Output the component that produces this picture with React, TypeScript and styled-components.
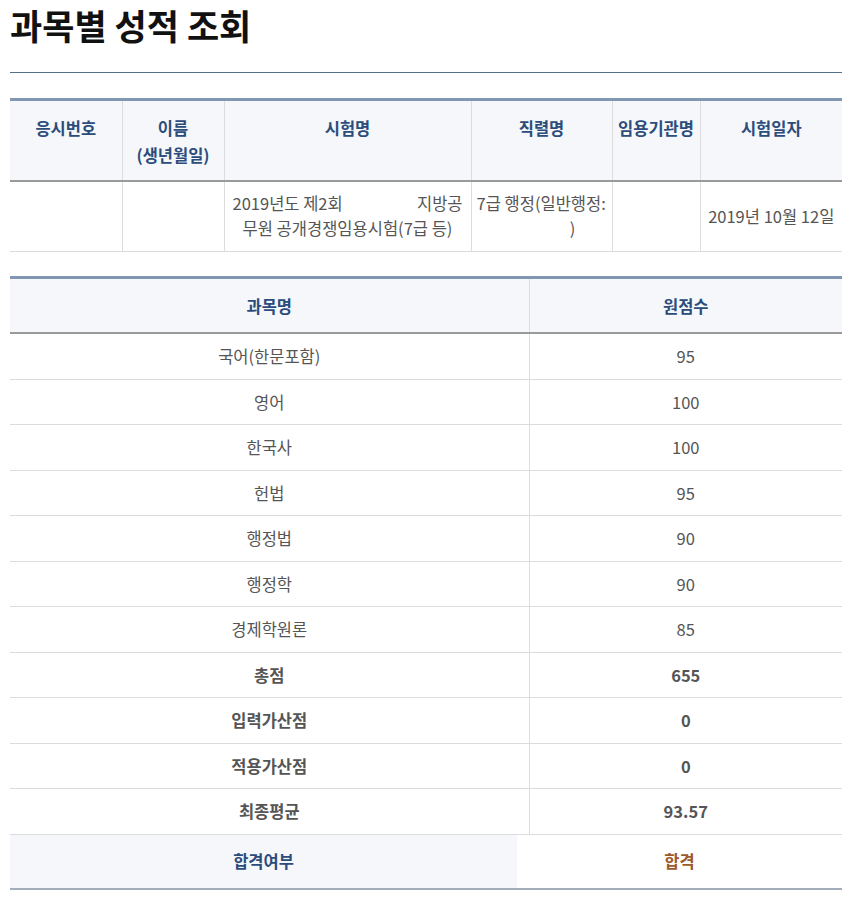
import { FC } from 'react';
import styled, { createGlobalStyle } from 'styled-components';

const GlobalStyle = createGlobalStyle`
  body {
    margin: 0;
    background: #fff;
    font-family: 'Noto Sans CJK KR', 'Noto Sans', sans-serif;
  }
`;

const scores = [
  { name: '국어(한문포함)', score: '95' },
  { name: '영어', score: '100' },
  { name: '한국사', score: '100' },
  { name: '헌법', score: '95' },
  { name: '행정법', score: '90' },
  { name: '행정학', score: '90' },
  { name: '경제학원론', score: '85' },
  { name: '총점', score: '655', strong: true },
  { name: '입력가산점', score: '0', strong: true },
  { name: '적용가산점', score: '0', strong: true },
  { name: '최종평균', score: '93.57', strong: true },
];

const App: FC = () => {
  return (
    <Page>
      <GlobalStyle />
      <PageTitle>과목별 성적 조회</PageTitle>
      <TitleLine />

      <InfoTable>
        <colgroup>
          <col style={{ width: 112 }} />
          <col style={{ width: 102 }} />
          <col style={{ width: 247 }} />
          <col style={{ width: 141 }} />
          <col style={{ width: 88 }} />
          <col style={{ width: 142 }} />
        </colgroup>
        <thead>
          <tr>
            <InfoHead>응시번호</InfoHead>
            <InfoHead>
              이름
              <br />
              (생년월일)
            </InfoHead>
            <InfoHead>시험명</InfoHead>
            <InfoHead>직렬명</InfoHead>
            <InfoHead>임용기관명</InfoHead>
            <InfoHead>시험일자</InfoHead>
          </tr>
        </thead>
        <tbody>
          <tr>
            <InfoCell></InfoCell>
            <InfoCell></InfoCell>
            <InfoCell $pad={8}>
              <SplitLine>
                <span>2019년도 제2회</span>
                <span>지방공</span>
              </SplitLine>
              <Line $align="center">무원 공개경쟁임용시험(7급 등)</Line>
            </InfoCell>
            <InfoCell $pad={5}>
              <Line $align="left">7급 행정(일반행정:</Line>
              <Line $align="center" $shift={62}>
                )
              </Line>
            </InfoCell>
            <InfoCell></InfoCell>
            <InfoCell>2019년 10월 12일</InfoCell>
          </tr>
        </tbody>
      </InfoTable>

      <ScoreTable>
        <colgroup>
          <col style={{ width: 519 }} />
          <col style={{ width: 313 }} />
        </colgroup>
        <thead>
          <tr>
            <ScoreHead>과목명</ScoreHead>
            <ScoreHead>원점수</ScoreHead>
          </tr>
        </thead>
        <tbody>
          {scores.map((item, idx) => (
            <tr key={idx}>
              <ScoreCell $strong={item.strong}>{item.name}</ScoreCell>
              <ScoreCell $strong={item.strong}>{item.score}</ScoreCell>
            </tr>
          ))}
        </tbody>
      </ScoreTable>

      <ResultRow>
        <ResultLabel>합격여부</ResultLabel>
        <ResultValue>합격</ResultValue>
      </ResultRow>
    </Page>
  );
};

export default App;

const Page = styled.div`
  width: 832px;
  padding: 0 0 20px 10px;
`;

const PageTitle = styled.h1`
  margin: 0;
  padding-top: 1px;
  font-size: 35px;
  line-height: 48px;
  font-weight: 700;
  color: #111;
`;

const TitleLine = styled.div`
  height: 1px;
  margin-top: 23px;
  background-color: #566f8c;
`;

const InfoTable = styled.table`
  width: 100%;
  margin-top: 25px;
  border-collapse: collapse;
  table-layout: fixed;
  border-top: 3px solid #8196b3;
`;

const InfoHead = styled.th`
  height: 81px;
  padding: 14px 2px 0;
  box-sizing: border-box;
  vertical-align: top;
  background-color: #f5f7fa;
  border-left: 1px solid #dcdcdc;
  border-bottom: 2px solid #9a9a9a;
  color: #2c4d7c;
  font-size: 16.5px;
  line-height: 27px;
  font-weight: 700;

  &:first-child {
    border-left: none;
  }
`;

const InfoCell = styled.td<{ $pad?: number }>`
  height: 71px;
  padding: 0 ${({ $pad }) => $pad ?? 2}px;
  box-sizing: border-box;
  vertical-align: middle;
  border-left: 1px solid #dcdcdc;
  border-bottom: 1px solid #dcdcdc;
  color: #555;
  font-size: 16.5px;
  line-height: 25px;
  text-align: center;
  white-space: nowrap;

  &:first-child {
    border-left: none;
  }
`;

const SplitLine = styled.div`
  display: flex;
  justify-content: space-between;
`;

const Line = styled.div<{ $align: 'left' | 'center'; $shift?: number }>`
  text-align: ${({ $align }) => $align};
  padding-left: ${({ $shift }) => $shift ?? 0}px;
`;

const ScoreTable = styled.table`
  width: 100%;
  margin-top: 24px;
  border-collapse: collapse;
  table-layout: fixed;
  border-top: 3px solid #8196b3;
`;

const ScoreHead = styled.th`
  height: 53px;
  padding: 0;
  background-color: #f5f7fa;
  border-left: 1px solid #dcdcdc;
  border-bottom: 2px solid #9a9a9a;
  color: #2c4d7c;
  font-size: 16.5px;
  font-weight: 700;

  &:first-child {
    border-left: none;
  }
`;

const ScoreCell = styled.td<{ $strong?: boolean }>`
  height: 44.5px;
  padding: 0;
  text-align: center;
  border-left: 1px solid #dcdcdc;
  border-bottom: 1px solid #dcdcdc;
  color: #555;
  font-size: 16.5px;
  font-weight: ${({ $strong }) => ($strong ? 700 : 400)};

  &:first-child {
    border-left: none;
  }
`;

const ResultRow = styled.div`
  display: grid;
  grid-template-columns: 507px 1fr;
  height: 53px;
  border-bottom: 2px solid #a3adb9;
`;

const ResultLabel = styled.div`
  display: flex;
  align-items: center;
  justify-content: center;
  background-color: #f5f7fa;
  color: #2c4d7c;
  font-size: 16.5px;
  font-weight: 700;
`;

const ResultValue = styled.div`
  display: flex;
  align-items: center;
  justify-content: center;
  color: #9b5a2c;
  font-size: 16.5px;
  font-weight: 700;
`;
